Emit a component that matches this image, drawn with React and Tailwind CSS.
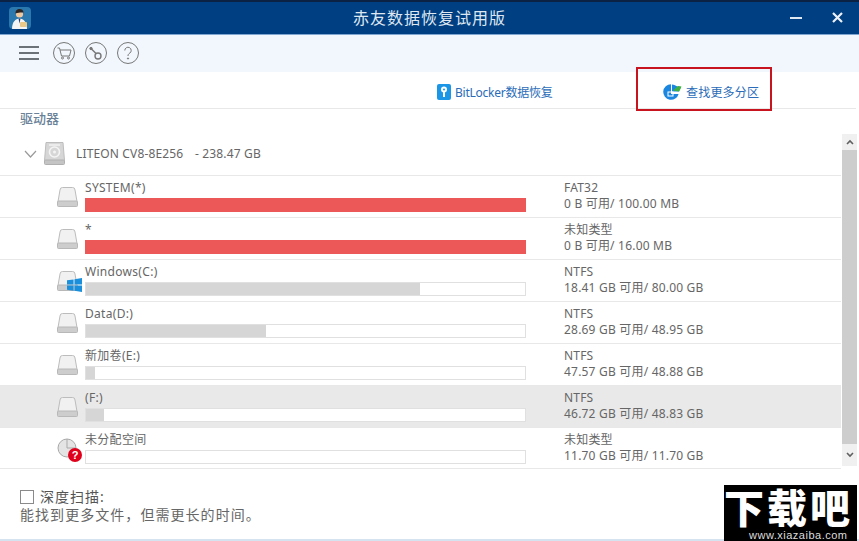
const font = { fontFamily: '"Noto Sans", "Noto Sans CJK SC", sans-serif' }

const rows = [
  { name: 'SYSTEM(*)', type: 'FAT32', size: '0 B 可用/ 100.00 MB', fill: 100, color: 'bg-[#ec5757]' },
  { name: '*', type: '未知类型', size: '0 B 可用/ 16.00 MB', fill: 100, color: 'bg-[#ec5757]' },
  { name: 'Windows(C:)', type: 'NTFS', size: '18.41 GB 可用/ 80.00 GB', fill: 76, icon: 'win' },
  { name: 'Data(D:)', type: 'NTFS', size: '28.69 GB 可用/ 48.95 GB', fill: 41 },
  { name: '新加卷(E:)', type: 'NTFS', size: '47.57 GB 可用/ 48.88 GB', fill: 2 },
  { name: '(F:)', type: 'NTFS', size: '46.72 GB 可用/ 48.83 GB', fill: 4, selected: true },
  { name: '未分配空间', type: '未知类型', size: '11.70 GB 可用/ 11.70 GB', fill: 0, icon: 'unknown', last: true },
]

function DriveIcon() {
  return (
    <svg width="21" height="20" viewBox="0 0 21 20">
      <path d="M3 3a2.5 2.5 0 0 1 2.5-2.5h10A2.5 2.5 0 0 1 18 3l2 11.5H1z" fill="#f1f1f1" stroke="#bcbcbc" />
      <rect x=".5" y="14" width="20" height="5.5" rx="1" fill="#cdcdcd" stroke="#b8b8b8" />
    </svg>
  )
}

function WinIcon() {
  return (
    <svg className="absolute left-[10px] top-[6px]" width="15" height="16" viewBox="0 0 16 16">
      <path d="M0 3l7-1v5.5H0zM8 1.8L16 .6v6.9H8zM0 8.5h7V14l-7-1zM8 8.5h8v6.9l-8-1.2z" fill="#1a8fdc" />
    </svg>
  )
}

function UnknownIcon() {
  return (
    <svg className="absolute left-0 top-0" width="26" height="26" viewBox="0 0 26 26">
      <circle cx="10" cy="11" r="9" fill="#e4e4e4" stroke="#a9a9a9" />
      <path d="M10 2v9h9" fill="none" stroke="#a9a9a9" />
      <circle cx="18" cy="18" r="7" fill="#e0001b" />
      <text x="18" y="22" textAnchor="middle" fontSize="11" fontWeight="700" fill="#fff" fontFamily="Liberation Sans, sans-serif">?</text>
    </svg>
  )
}

function PartitionRow({ row }) {
  return (
    <div className={`${row.last ? 'h-[41px]' : 'h-[42px]'} flex border-b border-[#e8e8e8] pl-[57px] ${row.selected ? 'bg-[#e9e9e9]' : ''}`}>
      <div className="relative w-[28px] pt-[11px] shrink-0">
        {row.icon === 'unknown' ? (
          <div className="relative h-[26px] -mt-[2px]"><UnknownIcon /></div>
        ) : (
          <div className="relative"><DriveIcon />{row.icon === 'win' && <WinIcon />}</div>
        )}
      </div>
      <div className="w-[441px] shrink-0">
        <div className="h-[22px] text-[12px] leading-[24px] tracking-[0.3px] text-[#666]">{row.name}</div>
        <div className={`h-[14px] bg-white overflow-hidden ${row.color ? '' : 'border border-[#e0e0e0]'}`}>
          <div className={`h-full ${row.color || 'bg-[#d6d6d6]'}`} style={{ width: `${row.fill}%` }} />
        </div>
      </div>
      <div className="ml-[38px] text-[12px] text-[#666] tracking-[0.2px] leading-[16px] pt-[4px]">
        <div>{row.type}</div>
        <div className="whitespace-nowrap">{row.size}</div>
      </div>
    </div>
  )
}

function Toolbar() {
  return (
    <div className="h-[37px] bg-[#f2f7fd] flex items-center pl-[19px] pb-[1px]">
      <div className="w-[20px] flex flex-col gap-[4px] mr-[14px]">
        <div className="h-[2px] bg-[#6b7278]" />
        <div className="h-[2px] bg-[#6b7278]" />
        <div className="h-[2px] bg-[#6b7278]" />
      </div>
      <svg className="mr-[10px]" width="22" height="22" viewBox="0 0 22 22" fill="none" stroke="#777" strokeWidth="1">
        <circle cx="11" cy="11" r="10.5" />
        <path d="M4.5 6h2l2 8h8l1.5-6H7" />
        <circle cx="9.5" cy="16" r="1" />
        <circle cx="15.5" cy="16" r="1" />
      </svg>
      <svg className="mr-[10px]" width="22" height="22" viewBox="0 0 22 22" fill="none" stroke="#777" strokeWidth="1">
        <circle cx="11" cy="11" r="10.5" />
        <circle cx="13" cy="14" r="3" strokeWidth="1.4" />
        <path d="M11 11.5L6.5 7" strokeWidth="1.4" />
        <circle cx="6" cy="6.5" r="1.2" fill="#777" />
      </svg>
      <svg width="22" height="22" viewBox="0 0 22 22" fill="none" stroke="#777" strokeWidth="1">
        <circle cx="11" cy="11" r="10.5" />
        <path d="M7.8 8.5a3.2 3.2 0 1 1 5 2.6c-1.2.8-1.8 1.4-1.8 2.9" />
        <circle cx="11" cy="16.5" r=".6" fill="#777" />
      </svg>
    </div>
  )
}

function LinkBar() {
  return (
    <div className="h-[37px] bg-white border-b border-[#e8e8e8] mr-[3px] flex items-center text-[12px] text-[#2a6cb8] pt-[6px]">
      <svg className="ml-[437px] mr-[4px] -mt-[2px]" width="14" height="16" viewBox="0 0 14 16">
        <rect width="14" height="16" rx="2" fill="#1b95e6" />
        <circle cx="7" cy="5.5" r="3" fill="#fff" />
        <rect x="6" y="7" width="2" height="6" fill="#fff" />
        <circle cx="7" cy="5.5" r="1" fill="#1b95e6" />
      </svg>
      <span className="w-[98px] tracking-[-0.25px] whitespace-nowrap">BitLocker数据恢复</span>
      <svg className="ml-[110px] mr-[4px] -mt-[2px]" width="19" height="16" viewBox="0 0 19 16">
        <path d="M8 .2a7.8 7.8 0 1 0 7.6 9.8H8z" fill="#1b86e0" />
        <path d="M9 .4c2 .2 4 1 5.6 2.2l3.4.4-2.2 4.6H9z" fill="#1b86e0" />
        <path d="M10 6.5l5-4.5 3.5.5-2.3 5z" fill="#3fb13f" />
        <rect x="5" y="8" width="5" height="4" fill="none" stroke="#fff" />
      </svg>
      <span className="tracking-[0.2px] whitespace-nowrap">查找更多分区</span>
    </div>
  )
}

function Scrollbar() {
  return (
    <div className="w-[15px] h-[332px] mt-[25px] ml-[1px] bg-[#f0f0f0] flex flex-col shrink-0">
      <div className="h-[16px] flex items-center justify-center">
        <svg width="8" height="6" viewBox="0 0 8 6" fill="none" stroke="#606060" strokeWidth="1.6"><path d="M1 5l3-3 3 3" /></svg>
      </div>
      <div className="h-[294px] bg-[#cdcdcd]" />
      <div className="flex-1 flex items-center justify-center">
        <svg width="8" height="6" viewBox="0 0 8 6" fill="none" stroke="#606060" strokeWidth="1.6"><path d="M1 1l3 3 3-3" /></svg>
      </div>
    </div>
  )
}

export default function App() {
  return (
    <div className="relative w-[859px] h-[541px] bg-white overflow-hidden flex flex-col" style={font}>
      {/* Title bar */}
      <div className="h-[35px] shrink-0 bg-[#003f81] border-t-2 border-[#0c2244] border-b border-b-[#7fa6d0] flex items-center justify-center text-[16px] tracking-[1px] text-[#dfe7f1] relative">
        <div className="absolute left-[9px] top-[5px] w-[22px] h-[22px] rounded-[4px] overflow-hidden">
          <svg width="22" height="22" viewBox="0 0 22 22">
            <rect width="22" height="22" fill="#2a78ad" />
            <circle cx="10.5" cy="7" r="3.6" fill="#f0c8a0" />
            <path d="M6.5 6.5c0-3.5 2-4.5 4-4.5s4 1 4 3.5c-2.5 0-5-.2-8 1z" fill="#2c2420" />
            <path d="M3 22c0-7 3.5-10.5 7.5-10.5S18 15 18 22z" fill="#f4f4f4" />
            <path d="M9.5 11.5h2l-1 5z" fill="#1b3f7a" />
            <rect x="11" y="15" width="7" height="5" rx="1" fill="#e8c98a" />
          </svg>
        </div>
        赤友数据恢复试用版
        <div className="absolute left-[790px] top-[15px] w-[12px] h-[2px] bg-[#dfe7f1]" />
        <svg className="absolute left-[832px] top-[10px]" width="11" height="11" viewBox="0 0 11 11" stroke="#eef2f7" strokeWidth="2.2">
          <path d="M1 1l9 9M10 1l-9 9" />
        </svg>
      </div>

      <Toolbar />
      <LinkBar />

      {/* Drive list */}
      <div className="flex flex-1 pr-[2px]">
        <div className="w-[841px] shrink-0">
          <div className="h-[18px] pl-[20px] text-[13px] font-medium leading-[18px] text-[#6a8198]">驱动器</div>
          <div className="h-[49px] border-b border-[#e8e8e8] flex items-center pl-[24px] pt-[5px] text-[12px] text-[#666] tracking-[0.15px]">
            <svg className="mr-[7px]" width="13" height="8" viewBox="0 0 13 8" fill="none" stroke="#9a9a9a" strokeWidth="1.2"><path d="M1 1l5.5 6L12 1" /></svg>
            <svg className="mr-[11px]" width="21" height="23" viewBox="0 0 21 23">
              <path d="M2 .5h17l1.5 18h-20z" fill="#d6d6d6" stroke="#bdbdbd" />
              <rect x=".5" y="18" width="20" height="4.5" rx="1" fill="#c4c4c4" stroke="#b0b0b0" />
              <circle cx="10.5" cy="10" r="5" fill="none" stroke="#f4f4f4" strokeWidth="1.6" />
              <circle cx="10.5" cy="10" r="1.5" fill="#f4f4f4" />
              <path d="M5 3h11" stroke="#f4f4f4" strokeWidth="1.4" />
            </svg>
            <span className="w-[119px] whitespace-nowrap">LITEON CV8-8E256</span>
            <span>- 238.47 GB</span>
          </div>
          {rows.map((row, i) => (
            <PartitionRow key={i} row={row} />
          ))}
        </div>
        <Scrollbar />
      </div>

      {/* Footer */}
      <div className="h-[72px] shrink-0 pl-[20px] pt-[20px] text-[#555] border-b-2 border-b-[#d5e2f0]">
        <div className="flex items-center h-[16px] text-[14px] leading-[16px] tracking-[1px]">
          <div className="w-[14px] h-[14px] border border-[#8a8a8a] bg-white mr-[6px]" />
          深度扫描:
        </div>
        <div className="text-[14px] tracking-[1.05px] leading-[20px] text-[#666]">能找到更多文件，但需更长的时间。</div>
      </div>

      {/* Red highlight over the link */}
      <div className="absolute left-[636px] top-[67px] w-[136px] h-[44px] border-2 border-[#c8141f]" />

      {/* Watermark */}
      <div className="absolute left-[724px] top-[485px] w-[133px] h-[56px] bg-black text-white">
        <div className="h-[42px] text-[40px] leading-[42px] font-black tracking-[3px] whitespace-nowrap" style={{ fontFamily: '"Noto Sans CJK SC", sans-serif' }}>下载吧</div>
        <div className="absolute left-[25px] top-[44px] text-[11px] leading-[12px] tracking-[0.5px] text-[#ddd] whitespace-nowrap" style={{ fontFamily: '"Liberation Sans", sans-serif' }}>www.xiazaiba.com</div>
      </div>
    </div>
  )
}
